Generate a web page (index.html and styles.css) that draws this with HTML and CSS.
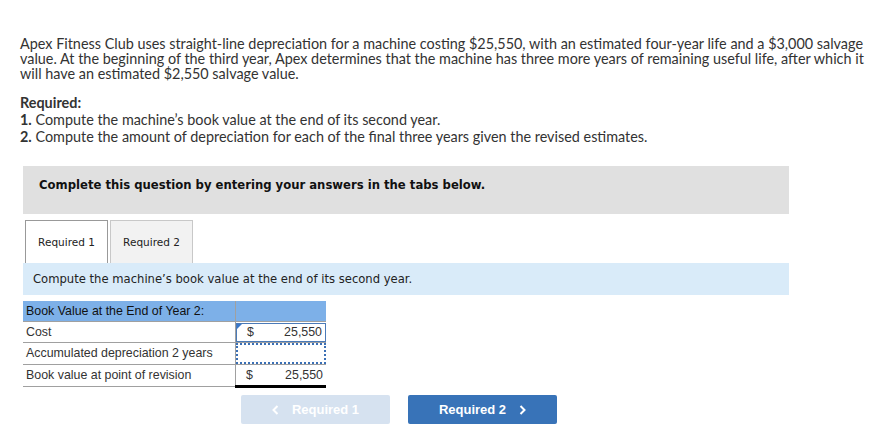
FILE: index.html
```html
<!DOCTYPE html>
<html>
<head>
<meta charset="utf-8">
<link rel="stylesheet" href="styles.css">
</head>
<body>
<div class="page">
  <p class="intro">Apex Fitness Club uses straight-line depreciation for a machine costing $25,550, with an estimated four-year life and a $3,000 salvage value. At the beginning of the third year, Apex determines that the machine has three more years of remaining useful life, after which it will have an estimated $2,550 salvage value.</p>
  <div class="required">
    <div class="req-title">Required:</div>
    <div><b>1.</b> Compute the machine’s book value at the end of its second year.</div>
    <div><b>2.</b> Compute the amount of depreciation for each of the final three years given the revised estimates.</div>
  </div>
  <div class="question">
    <div class="banner">Complete this question by entering your answers in the tabs below.</div>
    <div class="tabs">
      <div class="tab active">Required 1</div>
      <div class="tab">Required 2</div>
    </div>
    <div class="prompt">Compute the machine’s book value at the end of its second year.</div>
    <table class="sheet">
      <tr class="head">
        <td class="label">Book Value at the End of Year 2:</td>
        <td class="val"></td>
      </tr>
      <tr>
        <td class="label">Cost</td>
        <td class="val"><div class="cell focus"><span class="flag"></span><span>$</span><span>25,550</span></div></td>
      </tr>
      <tr>
        <td class="label">Accumulated depreciation 2 years</td>
        <td class="val"><div class="cell dotted"></div></td>
      </tr>
      <tr>
        <td class="label">Book value at point of revision</td>
        <td class="val total"><div class="cell"><span>$</span><span>25,550</span></div></td>
      </tr>
    </table>
    <div class="nav">
      <button class="btn prev"><svg class="chev" width="7" height="10" viewBox="0 0 7 10"><polyline points="5.5,1 1.5,5 5.5,9" fill="none" stroke="#fff" stroke-width="2"/></svg>Required 1</button>
      <button class="btn next">Required 2<svg class="chev" width="7" height="10" viewBox="0 0 7 10"><polyline points="1.5,1 5.5,5 1.5,9" fill="none" stroke="#fff" stroke-width="2"/></svg></button>
    </div>
  </div>
</div>
</body>
</html>
```

FILE: styles.css
```css
html, body {
  margin: 0;
  padding: 0;
  background: #fff;
}
.page {
  padding: 36px 8px 0 20px;
  font-family: Lato, "Open Sans", sans-serif;
  font-size: 14.4px;
  line-height: 15px;
  color: #333;
}
.intro {
  margin: 0;
}
.required {
  margin-top: 13px;
  line-height: 17px;
}
.req-title {
  font-weight: bold;
}
.question {
  margin: 21px 0 0 3px;
  width: 766px;
}
.banner {
  background: #e0e0e0;
  height: 48px;
  box-sizing: border-box;
  padding: 12px 16px;
  font-family: "DejaVu Sans", Verdana, sans-serif;
  font-weight: bold;
  font-size: 11.65px;
  line-height: 15px;
  color: #111;
}
.tabs {
  display: flex;
  gap: 2px;
  margin-top: 6px;
  padding-left: 2px;
}
.tab {
  width: 83px;
  height: 43px;
  box-sizing: border-box;
  border: 1px solid #c8c8c8;
  border-bottom: none;
  background: #f2f2f2;
  font-family: "DejaVu Sans", Verdana, sans-serif;
  font-size: 10.5px;
  color: #222;
  display: flex;
  align-items: center;
  justify-content: center;
}
.tab.active {
  background: #fff;
  border-color: #999;
}
.prompt {
  background: #d9ebf9;
  height: 32px;
  box-sizing: border-box;
  padding: 9px 10px;
  font-family: "DejaVu Sans", Verdana, sans-serif;
  font-size: 11.6px;
  line-height: 15px;
  color: #222;
}
.sheet {
  margin-top: 6px;
  border-collapse: collapse;
  font-family: "Liberation Sans", Arial, sans-serif;
  font-size: 12.4px;
  line-height: 15px;
  color: #333;
}
.sheet td {
  padding: 0;
  height: 20px;
  border-bottom: 1px solid #a0a0a0;
}
.sheet .label {
  width: 209px;
  padding-left: 3px;
  border-right: 1px solid #a0a0a0;
}
.sheet .val {
  width: 90px;
}
.sheet .head td {
  background: #7db0e8;
  color: #111;
  height: 20px;
}
.sheet .val.total {
  border-bottom: 3px solid #000;
}
.cell {
  position: relative;
  height: 19px;
  box-sizing: border-box;
  display: flex;
  justify-content: space-between;
  align-items: center;
  padding: 0 3px 0 10px;
}
.cell.focus {
  border: 1px solid #4a7ab8;
}
.cell.dotted {
  border: 2px dotted #3a6fb5;
  height: 21px;
}
.flag {
  position: absolute;
  left: 0;
  top: 0;
  width: 0;
  height: 0;
  border-top: 5px solid #3a78c9;
  border-right: 5px solid transparent;
}
.nav {
  display: flex;
  gap: 18px;
  margin-top: 7px;
  padding-left: 218px;
}
.btn {
  width: 149px;
  height: 29px;
  border: none;
  border-radius: 2px;
  font-family: "Liberation Sans", Arial, sans-serif;
  font-weight: bold;
  font-size: 13px;
  color: #fff;
  display: flex;
  align-items: center;
  justify-content: center;
  gap: 13px;
  padding: 0;
}
.btn.prev {
  background: #d6e2f0;
}
.btn.next {
  background: #3873b8;
}
.chev {
  display: block;
}
```
